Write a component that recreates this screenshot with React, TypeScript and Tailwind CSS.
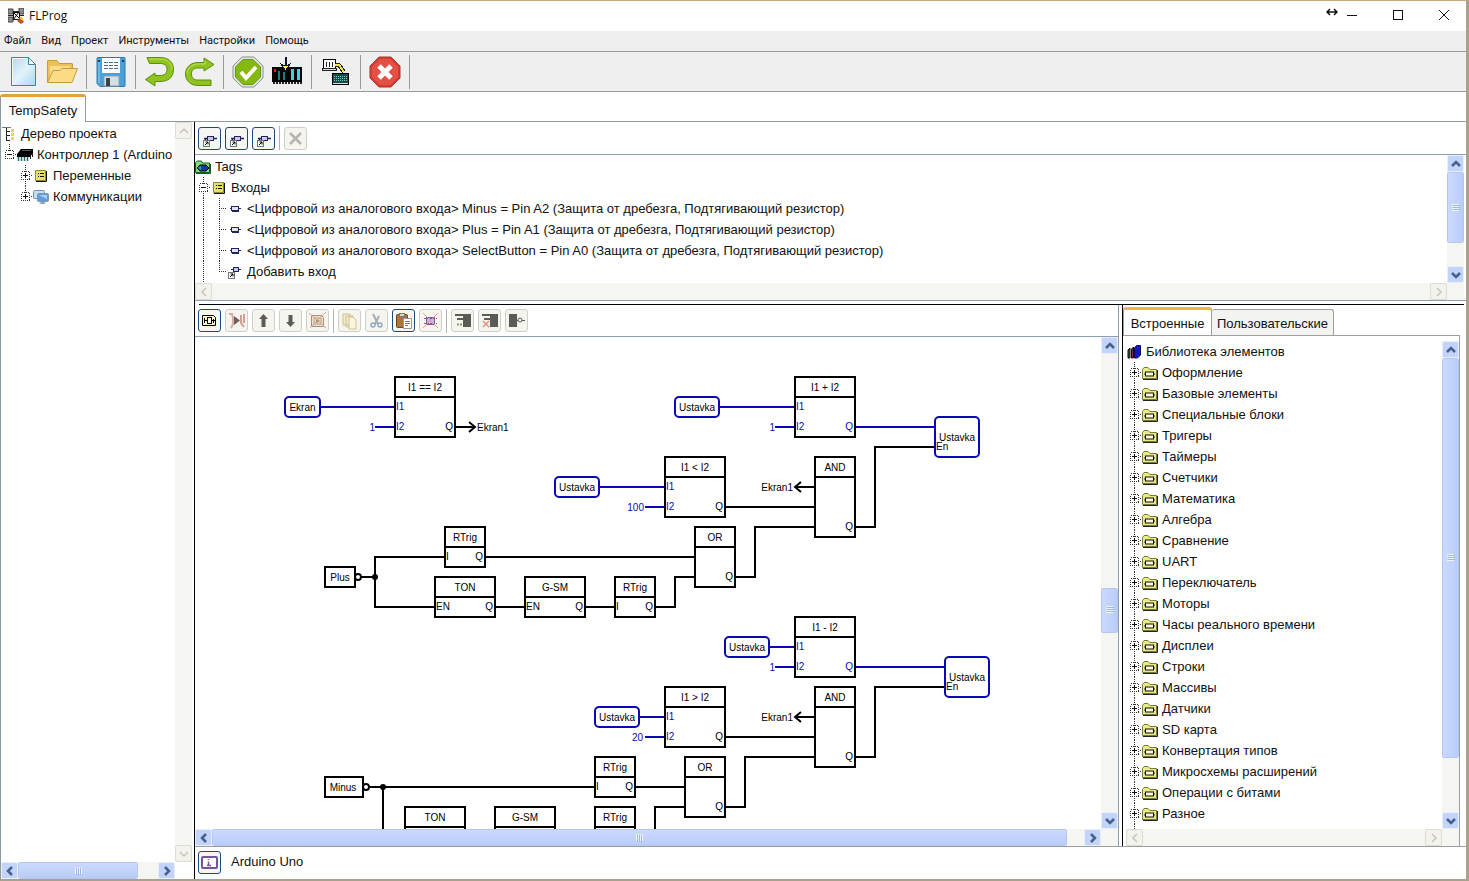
import React from "react";
import clsx from "clsx";

const menu = ["Файл", "Вид", "Проект", "Инструменты", "Настройки", "Помощь"];

const library = [
  "Оформление",
  "Базовые элементы",
  "Специальные блоки",
  "Тригеры",
  "Таймеры",
  "Счетчики",
  "Математика",
  "Алгебра",
  "Сравнение",
  "UART",
  "Переключатель",
  "Моторы",
  "Часы реального времени",
  "Дисплеи",
  "Строки",
  "Массивы",
  "Датчики",
  "SD карта",
  "Конвертация типов",
  "Микросхемы расширений",
  "Операции с битами",
  "Разное",
];

const inputs = [
  "<Цифровой из аналогового входа> Minus = Pin A2 (Защита от дребезга, Подтягивающий резистор)",
  "<Цифровой из аналогового входа> Plus = Pin A1 (Защита от дребезга, Подтягивающий резистор)",
  "<Цифровой из аналогового входа> SelectButton = Pin A0 (Защита от дребезга, Подтягивающий резистор)",
];

/* ---------- Main toolbar icons ---------- */

const NewIcon = () => (
  <svg width="32" height="32" viewBox="0 0 32 32">
    <defs>
      <linearGradient id="page" x1="0" y1="0" x2="1" y2="1">
        <stop offset="0" stopColor="#b4d8ea" />
        <stop offset="0.5" stopColor="#e2f3fa" />
        <stop offset="1" stopColor="#a9d7ec" />
      </linearGradient>
    </defs>
    <path d="M4.5 1.500h17l7 7v21h-24z" fill="url(#page)" stroke="#3d84ab" />
    <path d="M5.500 28.500V2.500h15" fill="none" stroke="#eef9fd" />
    <path d="M21.500 1.500v7h7z" fill="#fff" stroke="#3d84ab" />
  </svg>
);

const OpenIcon = () => (
  <svg width="32" height="32" viewBox="0 0 32 32">
    <path d="M1.500 26.500V5q0-.5.5-.5h9l2 3h13q.5 0 .5.5v5" fill="#edc05a" stroke="#c59a42" />
    <path d="M4 24V10h20v5H9z" fill="#f8dc8c" />
    <path d="M1.500 26.500L7 14.500h7l2-2h15.500l-5.500 14z" fill="#fbdb84" stroke="#c59a42" />
  </svg>
);

const SaveIcon = () => (
  <svg width="32" height="32" viewBox="0 0 32 32">
    <path d="M3 1.500h26q1 0 1 1v27q0 1-1 1H5l-3-3v-25q0-1 1-1z" fill="#4ba0d8" stroke="#2b76ab" />
    <path d="M4 3v24" stroke="#8fcdf0" />
    <rect x="7" y="2" width="18" height="15" fill="#fbfdff" />
    <path d="M9 6.500h14M9 9.500h14M9 12.500h14" stroke="#566d80" strokeDasharray="4 1" />
    <rect x="3" y="4" width="2" height="2" fill="#123f62" />
    <rect x="27" y="4" width="2" height="2" fill="#123f62" />
    <rect x="9" y="20" width="15" height="10" fill="#d9dee2" stroke="#8aa0ae" />
    <rect x="11" y="22" width="4" height="8" fill="#3a434b" />
  </svg>
);

const UndoIcon = () => (
  <svg width="32" height="32" viewBox="0 0 32 32">
    <path
      d="M3 1.500h13c8 0 13.500 4 13.500 12S24 25.500 16 25.500h-5V30L1.500 23.500 11 17v2.500h5c4.500 0 7-2 7-6s-2.500-6-7-6H5.500z"
      fill="#8fc31e"
      stroke="#5c8c0d"
      strokeLinejoin="round"
    />
    <path d="M5 3h11c7 0 12 4 12 10.500" fill="none" stroke="#c0e05c" />
  </svg>
);

const RedoIcon = () => (
  <svg width="32" height="32" viewBox="0 0 32 32">
    <path
      d="M28 29.500H15C8 29.500 2.500 25 2.500 18S8 6.500 15 6.500h6V2l10 6.500-10 6.500v-3h-6c-4 0-6.500 2-6.500 6s2.500 6 6.500 6h13z"
      fill="#8fc31e"
      stroke="#5c8c0d"
      strokeLinejoin="round"
    />
    <path d="M4 18C4 12 9 8 15 8h7V5" fill="none" stroke="#c0e05c" />
  </svg>
);

const CheckIcon = () => (
  <svg width="32" height="32" viewBox="0 0 32 32">
    <path d="M10 1h12l9 9v12l-9 9H10l-9-9V10z" fill="#dfe3e3" stroke="#8b9190" />
    <path d="M11 3.500h10l7.500 7.500v10L21 28.500H11L3.500 21V11z" fill="#86b90f" stroke="#699a08" />
    <path d="M9 16l5 6 10-11" fill="none" stroke="#fff" strokeWidth="4" />
  </svg>
);

const UploadIcon = () => (
  <svg width="32" height="32" viewBox="0 0 32 32" shapeRendering="crispEdges">
    <rect x="1" y="11" width="30" height="15" fill="#050505" />
    <path d="M2 27h29" stroke="#222" strokeWidth="2" strokeDasharray="2 1" />
    <rect x="3" y="13" width="2" height="3" fill="#e02020" />
    <path d="M8 15v9M13 16v8" stroke="#1d7f83" strokeWidth="2" />
    <path d="M21 13v11M27 13v11" stroke="#35d6dc" strokeWidth="3" />
    <path d="M14.500 1v10" stroke="#14142e" strokeWidth="2" />
    <path d="M9.500 7.500l5 7 5-7-3 2h-4z" fill="#fff06a" stroke="#14142e" />
  </svg>
);

const MonitorIcon = () => (
  <svg width="32" height="32" viewBox="0 0 32 32" shapeRendering="crispEdges">
    <path d="M3.500 3.500h12v9h-12z" fill="#fff" stroke="#000" />
    <path d="M6 6v5M9 6v5M12 6v5" stroke="#222" />
    <rect x="2.500" y="12.500" width="14" height="2" fill="#ddd" stroke="#222" />
    <path d="M15 9h4l5 7" fill="none" stroke="#222" strokeWidth="4" />
    <path d="M15 9h4l5 7" fill="none" stroke="#f4e548" strokeWidth="2" />
    <path d="M12.500 17.500h16v11h-16z" fill="#1c4a4a" stroke="#000" />
    <path d="M14 20.500h13M14 22.500h13M14 24.500h13" stroke="#74c9c1" strokeDasharray="1 1" />
    <path d="M13 27h15" stroke="#ddd" />
  </svg>
);

const StopIcon = () => (
  <svg width="32" height="32" viewBox="0 0 32 32">
    <path d="M10 1h12l9 9v12l-9 9H10l-9-9V10z" fill="#d63c30" stroke="#b0382e" />
    <path d="M11 3h10l8 8v10l-8 8H11l-8-8V11z" fill="#e45044" />
    <path d="M10 10l12 12M22 10L10 22" stroke="#fff" strokeWidth="5" />
  </svg>
);

const mainTools = [
  [
    { name: "Новый", icon: <NewIcon /> },
    { name: "Открыть", icon: <OpenIcon /> },
  ],
  [{ name: "Сохранить", icon: <SaveIcon /> }],
  [
    { name: "Отменить", icon: <UndoIcon /> },
    { name: "Повторить", icon: <RedoIcon /> },
  ],
  [
    { name: "Проверить", icon: <CheckIcon /> },
    { name: "Загрузить", icon: <UploadIcon /> },
  ],
  [{ name: "Монитор порта", icon: <MonitorIcon /> }],
  [{ name: "Закрыть проект", icon: <StopIcon /> }],
];

/* ---------- Small icons ---------- */

const Small = ({ children }: { children?: React.ReactNode }) => (
  <svg width="16" height="16" viewBox="0 0 16 16" className="shrink-0" aria-hidden="true">
    {children}
  </svg>
);

const AppIcon = () => (
  <Small>
    <path d="M0 1h5v5H0zM0 9h5v5H0zM11 0h5v6h-5z" fill="#8d8d8d" stroke="#444" />
    <path d="M0 7.500h16M5 3.500h6" stroke="#222" />
    <path d="M5.500 4.500h6v7h-6z" fill="#f2f2f2" stroke="#111" />
    <path d="M5 4l7 7M11 4l-6 8" stroke="#111" />
    <path d="M9 13l4-4 3 5-3 2z" fill="#c4511f" />
    <path d="M12 9l3 3" stroke="#f3d33b" strokeWidth="2" />
  </Small>
);

const ProjectIcon = () => (
  <Small>
    <path d="M1 1.500h9" stroke="#777" />
    <path d="M5.500 2v13M5 5.500h4M5 9.500h4M5 14.500h4" stroke="#222" />
    <path d="M11.500 3v12" stroke="#e5df2f" strokeWidth="3" strokeDasharray="3 1" />
  </Small>
);

const ChipIcon = () => (
  <Small>
    <path d="M4 2h12v4l-3 4H0V7z" fill="#000" />
    <path d="M5 3.500h9" stroke="#555" />
    <path d="M1.500 10v4M4.500 10v4M7.500 10v4M10.500 10v4" stroke="#1b7070" strokeWidth="1.500" />
    <path d="M13.500 9v3M15.500 6v4" stroke="#222" />
  </Small>
);

const ListIcon = () => (
  <Small>
    <path d="M3 13.500h10.500V3" fill="none" stroke="#111" />
    <path d="M2.500 2.500h10v10h-10z" fill="#e4e069" stroke="#8a883a" />
    <path d="M5 5.500h1M7 5.500h4M5 8.500h1M7 8.500h4" stroke="#111" />
  </Small>
);

const CommIcon = () => (
  <Small>
    <rect x="0.500" y="1.500" width="11" height="8" rx="1" fill="#c7dff5" stroke="#6f8fae" />
    <rect x="4.500" y="4.500" width="11" height="8" rx="1" fill="#5d9ee0" stroke="#8096ad" />
    <path d="M6 6h8v4z" fill="#a9d1f7" />
    <path d="M8 13h4v2H6z" fill="#9aa7b5" />
  </Small>
);

const TagsIcon = () => (
  <Small>
    <path d="M.5 13.500v-10l2-1.500h4l1 2h7v9.500z" fill="#7de07a" stroke="#1b5c20" />
    <path d="M1 14.500h14.500V5" fill="none" stroke="#153" />
    <path d="M2 9l3-3h6l3 3-3 3H5z" fill="#143a9c" stroke="#000" />
    <path d="M3 9l3-2v4z" fill="#19b3a0" />
  </Small>
);

const PinIcon = () => (
  <Small>
    <path d="M3 7.500h11" stroke="#22225c" />
    <rect x="4.500" y="5.500" width="7" height="4" fill="#e4e4f8" stroke="#22225c" />
    <path d="M5 10.500h7" fill="none" stroke="#22225c" />
  </Small>
);

const AddPinIcon = () => (
  <Small>
    <path d="M4 5.500h10M6.500 5v5" stroke="#22225c" />
    <rect x="6.500" y="3.500" width="5" height="4" fill="#c8c8ef" stroke="#22225c" />
    <rect x="1.500" y="8.500" width="6" height="6" fill="#fff" stroke="#777" />
    <path d="M3 13l3-3M3.500 10H6v2.500" stroke="#000" fill="none" />
  </Small>
);

const BooksIcon = () => (
  <Small>
    <path d="M2 14V6l2-2v10z" fill="#2f5a33" stroke="#111" />
    <path d="M5.500 14V5l2-2v11z" fill="#7a2445" stroke="#111" />
    <path d="M8.500 14V4l2-2.500h4V11l-3 3z" fill="#1414c4" stroke="#0b0b50" />
  </Small>
);

const FolderIcon = () => (
  <Small>
    <path d="M.5 13.500v-9l1.500-2h4l2 2h6.500v9z" fill="#e9eb84" stroke="#777a33" />
    <path d="M1 14.500h14.500V5" fill="none" stroke="#222" />
    <path d="M2 9h11" stroke="#222" />
    <rect x="3.500" y="7" width="8" height="4" fill="#fff8d8" stroke="#111" />
  </Small>
);

type NodeKind = "plus" | "minus" | "leaf" | "line" | "none";

/* One 16px cell of tree connectors */
const Branch = ({ kind, last }: { kind: NodeKind; last?: boolean }) => (
  <svg width="16" height="21" viewBox="0 0 16 21" className="shrink-0" shapeRendering="crispEdges" aria-hidden="true">
    {kind !== "none" && (
      <path d={last ? "M8.500 0v11" : "M8.500 0v21"} stroke="#333" strokeDasharray="1 1" />
    )}
    {kind !== "line" && kind !== "none" && <path d="M8 10.500h8" stroke="#333" strokeDasharray="1 1" />}
    {(kind === "plus" || kind === "minus") && (
      <>
        <rect x="4.500" y="6.500" width="8" height="8" fill="#fff" stroke="#333" strokeDasharray="1 1" />
        <path d="M6 10.500h5" stroke="#111" />
      </>
    )}
    {kind === "plus" && <path d="M8.500 8v5" stroke="#111" />}
  </svg>
);

type RowProps = {
  icon: React.ReactNode;
  label?: string;
  branches?: NodeKind[];
  last?: boolean;
};

const Row = ({ icon, label, branches = [], last }: RowProps) => (
  <li className="flex h-[21px] items-center whitespace-nowrap">
    {branches.map((kind, i) => (
      <Branch key={i} kind={kind} last={last && i === branches.length - 1} />
    ))}
    {icon}
    <span className="ml-1">{label}</span>
  </li>
);

/* ---------- Scroll bars ---------- */

const arrows = {
  up: "M3 9l4-4 4 4",
  down: "M3 5l4 4 4-4",
  left: "M9 3L5 7l4 4",
  right: "M5 3l4 4-4 4",
};

const arrowNames = { up: "Вверх", down: "Вниз", left: "Влево", right: "Вправо" };

const ScrollButton = ({ dir, off }: { dir: keyof typeof arrows; off?: boolean }) => (
  <button
    type="button"
    aria-label={arrowNames[dir]}
    disabled={off}
    className={clsx(
      "flex size-[17px] shrink-0 items-center justify-center rounded-xs border",
      off ? "border-[#dddcd5] bg-[#f3f2ec]" : "border-[#e8eefc] bg-[#c3d4fb]"
    )}
  >
    <svg width="14" height="14" viewBox="0 0 14 14">
      <path d={arrows[dir]} fill="none" stroke={off ? "#c6c5bd" : "#44608f"} strokeWidth={off ? 1.5 : 2.5} />
    </svg>
  </button>
);

type ScrollProps = {
  vertical?: boolean;
  start?: number;
  size?: number;
  off?: boolean;
};

/* start and size of the thumb are percents of the track */
const ScrollBar = ({ vertical, start = 0, size = 0, off }: ScrollProps) => (
  <div className={clsx("flex shrink-0 bg-[#f5f5f1]", vertical ? "w-[17px] flex-col" : "h-[17px]")}>
    <ScrollButton dir={vertical ? "up" : "left"} off={off} />
    <div className={clsx("flex min-h-0 min-w-0 flex-1", vertical && "flex-col")}>
      {!off && (
        <>
          <div className="shrink-0" style={{ flexBasis: `${start}%` }} />
          <div
            className={clsx(
              "flex shrink-0 items-center justify-center rounded-xs border border-white outline -outline-offset-1 outline-[#b4c6f0]",
              vertical
                ? "bg-linear-to-r from-[#cbd9fe] to-[#b9cdfa]"
                : "bg-linear-to-b from-[#cbd9fe] to-[#b9cdfa]"
            )}
            style={{ flexBasis: `${size}%` }}
          >
            <svg width="8" height="8" viewBox="0 0 8 8" className={vertical ? "" : "rotate-90"}>
              <path d="M0 .5h7M0 2.500h7M0 4.500h7M0 6.500h7" stroke="#eef4fe" />
              <path d="M1 1.500h7M1 3.500h7M1 5.500h7" stroke="#9fb5e8" />
            </svg>
          </div>
        </>
      )}
    </div>
    <ScrollButton dir={vertical ? "down" : "right"} off={off} />
  </div>
);

/* ---------- Small tool buttons ---------- */

const ToolButton = ({ name, off, children }: { name: string; off?: boolean; children: React.ReactNode }) => (
  <button
    type="button"
    aria-label={name}
    disabled={off}
    className={clsx(
      "flex size-[23px] shrink-0 items-center justify-center rounded-[3px] border",
      off ? "border-[#d0cfc5] bg-[#f5f4ee]" : "border-[#1f4a78] bg-[#f6f6f2]"
    )}
  >
    <svg width="19" height="19" viewBox="0 0 19 19">
      {children}
    </svg>
  </button>
);

const Divider = () => <div className="h-6 w-px bg-[#b4b4ac]" />;

const addPin = (
  <>
    <path d="M4 9.500h13M5.500 9v4" stroke="#22225c" strokeWidth="1.500" />
    <rect x="7.500" y="7.500" width="6" height="4" fill="#c8c8ef" stroke="#22225c" />
    <rect x="3.500" y="11.500" width="6" height="6" fill="#fff" stroke="#777" />
    <path d="M5 16l3-3M5.500 13H8v2.500" stroke="#000" fill="none" />
  </>
);

const DiagramTools = () => (
  <div className="flex h-8 shrink-0 items-center gap-1 border-b border-[#8ba0ac] pl-[3px]">
    <ToolButton name="Добавить плату">
      <path d="M2.500 4.500h11l2 2v8h-13z" fill="#fbf7b0" stroke="#000" />
      <rect x="7.500" y="6.500" width="4" height="6" fill="#fff" stroke="#000" />
      <path d="M4 9.500h3M12 9.500h3M4.500 7v5M13.500 8v4" stroke="#000" />
    </ToolButton>
    <ToolButton name="Вставить плату" off>
      <path d="M2 3h3l1 4v6l-2 4" stroke="#dba8a4" strokeWidth="2" fill="none" />
      <path d="M7 5l6 4.500L7 14z" fill="#6f625c" />
      <path d="M14 4v8l3 4M17 3v9" stroke="#d39d98" strokeWidth="2" fill="none" />
    </ToolButton>
    <ToolButton name="Плата выше" off>
      <path d="M9.500 3L14 8h-2.500v8h-4V8H5z" fill="#5c5c56" />
    </ToolButton>
    <ToolButton name="Плата ниже" off>
      <path d="M9.500 16L14 11h-2.500V4h-4v7H5z" fill="#5c5c56" />
    </ToolButton>
    <ToolButton name="Удалить плату" off>
      <path d="M3.500 4.500h10l2 2v9h-12z" fill="#efe3c6" stroke="#a38e86" />
      <path d="M6 7h7v6H6z" fill="none" stroke="#b39a88" />
      <path d="M8 8l4 2-4 2z" fill="#8b7868" />
      <path d="M1 2l17 15M18 1L2 17" stroke="#e0a196" />
    </ToolButton>
    <Divider />
    <ToolButton name="Копировать" off>
      <path d="M3 3h7v11H3zM6 5h7v11H6z" fill="#f3ebcc" stroke="#cfc195" />
      <path d="M9 6h4l3 3v9H9z" fill="#fbf5dd" stroke="#cfc195" />
    </ToolButton>
    <ToolButton name="Вырезать" off>
      <path d="M6 3l5 10M12 5l-4 8" stroke="#a3aeb6" strokeWidth="2" />
      <circle cx="6" cy="14" r="2" fill="none" stroke="#8fa9c4" strokeWidth="1.500" />
      <circle cx="13" cy="14" r="2" fill="none" stroke="#8fa9c4" strokeWidth="1.500" />
    </ToolButton>
    <ToolButton name="Вставить">
      <rect x="2.500" y="3.500" width="11" height="13" rx="1" fill="#b07435" stroke="#70431a" />
      <rect x="5.500" y="2.500" width="5" height="3" fill="#d8d8d8" stroke="#777" />
      <path d="M9.500 7.500h8v10h-8z" fill="#fff" stroke="#999" />
      <path d="M11 10.500h5M11 12.500h5M11 14.500h3" stroke="#777" />
    </ToolButton>
    <ToolButton name="Удалить" off>
      <rect x="5.500" y="6.500" width="8" height="7" fill="#c6b8dc" stroke="#6f5fa0" />
      <path d="M3 7.500h13M3 12.500h13" stroke="#6f5fa0" strokeDasharray="2 1" />
      <path d="M2 2l15 15M17 2L2 17" stroke="#e29a94" />
    </ToolButton>
    <Divider />
    <ToolButton name="Добавить вход блока" off>
      <rect x="10" y="3" width="8" height="13" fill="#5c5c56" />
      <path d="M2 4h8M4 8h6" stroke="#5c5c56" strokeWidth="2" />
      <path d="M4 13.500h6" stroke="#8a9a70" strokeWidth="2" strokeDasharray="2 1" />
    </ToolButton>
    <ToolButton name="Удалить вход блока" off>
      <rect x="10" y="3" width="8" height="13" fill="#5c5c56" />
      <path d="M2 4h8M4 8h6" stroke="#5c5c56" strokeWidth="2" />
      <path d="M3 10l6 6M9 10l-6 6" stroke="#e29084" strokeWidth="1.500" />
    </ToolButton>
    <ToolButton name="Инвертировать" off>
      <rect x="2" y="3" width="8" height="13" fill="#5c5c56" />
      <path d="M10 9.500h8" stroke="#5c5c56" />
      <circle cx="13" cy="9" r="2" fill="#f5f4ee" stroke="#5c5c56" />
    </ToolButton>
  </div>
);

/* ---------- Diagram ---------- */

const BLUE = "#0a0ab4";

type BlockProps = {
  x: number;
  y: number;
  w?: number;
  h?: number;
  title: string;
  input?: string;
  output?: string;
  blueOut?: boolean;
};

const Block = ({ x, y, w = 40, h = 40, title, input, output = "Q", blueOut }: BlockProps) => (
  <g>
    <path d={`M${x} ${y}h${w}v${h}h${-w}zM${x} ${y + 20}h${w}`} fill="none" stroke="#000" strokeWidth="2" />
    <text x={x + w / 2} y={y + 14} textAnchor="middle">{title}</text>
    {input && <text x={x + 1} y={y + 33}>{input}</text>}
    {output && (
      <text x={x + w - 2} y={y + h - 7} textAnchor="end" fill={blueOut ? BLUE : "#000"}>{output}</text>
    )}
  </g>
);

/* Arithmetic and compare blocks have two blue inputs */
const MathBlock = ({ x, y, title, blueOut }: BlockProps) => (
  <g>
    <Block x={x} y={y} w={60} h={60} title={title} blueOut={blueOut} />
    <text x={x + 1} y={y + 33} fill={BLUE}>I1</text>
    <text x={x + 1} y={y + 53} fill={BLUE}>I2</text>
  </g>
);

const Variable = ({ x, y, w = 44, name }: { x: number; y: number; w?: number; name: string }) => (
  <g>
    <rect x={x} y={y} width={w} height="20" rx="4" fill="none" stroke={BLUE} strokeWidth="2" />
    <text x={x + w / 2} y={y + 14} textAnchor="middle">{name}</text>
  </g>
);

const Output = ({ x, y, name }: { x: number; y: number; name: string }) => (
  <g>
    <rect x={x} y={y} width="44" height="40" rx="4" fill="none" stroke={BLUE} strokeWidth="2" />
    <text x={x + 22} y={y + 24} textAnchor="middle">{name}</text>
    <text x={x + 1} y={y + 33}>En</text>
  </g>
);

const Diagram = () => (
  <svg
    width="906"
    height="492"
    viewBox="0 0 906 492"
    className="block font-['Liberation_Sans',Arial,sans-serif] text-[10px]"
  >
    <g fill="none" stroke={BLUE} strokeWidth="2">
      <path d="M125 70H200M180 90H200" />
      <path d="M524 70H600M580 90H600M660 90H740" />
      <path d="M404 150H470M450 170H470" />
      <path d="M574 310H600M580 330H600M660 330H750" />
      <path d="M444 380H470M450 400H470" />
    </g>
    <g fill="none" stroke="#000" strokeWidth="2">
      <path d="M260 90H279M274 85l6 5l-6 5" />
      <path d="M660 190H680V110H740" />
      <path d="M530 170H620M620 150H601M606 145l-6 5l6 5" />
      <path d="M540 240H560V190H620" />
      <path d="M166 240H180M250 220H180V270H240" />
      <path d="M290 220H500M300 270H330M390 270H420M460 270H480V240H500" />
      <path d="M660 420H680V350H750" />
      <path d="M530 400H620M620 380H601M606 375l-6 5l6 5" />
      <path d="M530 470H550V420H620" />
      <path d="M174 450H400M188 450V492M440 450H490M460 492V470H490" />
      <circle cx="163" cy="240" r="3" />
      <circle cx="171" cy="450" r="3" />
      <rect x="130" y="230" width="30" height="20" />
      <rect x="130" y="440" width="38" height="20" />
    </g>
    <circle cx="180" cy="240" r="3" />
    <circle cx="188" cy="450" r="3" />
    <text x="145" y="244" textAnchor="middle">Plus</text>
    <text x="148" y="454" textAnchor="middle">Minus</text>

    <g fill={BLUE} textAnchor="end">
      <text x="180" y="94">1</text>
      <text x="580" y="94">1</text>
      <text x="449" y="174">100</text>
      <text x="580" y="334">1</text>
      <text x="448" y="404">20</text>
    </g>
    <text x="282" y="94">Ekran1</text>
    <text x="598" y="154" textAnchor="end">Ekran1</text>
    <text x="598" y="384" textAnchor="end">Ekran1</text>

    <Variable x={90} y={60} w={35} name="Ekran" />
    <Variable x={480} y={60} name="Ustavka" />
    <Variable x={360} y={140} name="Ustavka" />
    <Variable x={530} y={300} name="Ustavka" />
    <Variable x={400} y={370} name="Ustavka" />
    <Output x={740} y={80} name="Ustavka" />
    <Output x={750} y={320} name="Ustavka" />

    <MathBlock x={200} y={40} title="I1 == I2" />
    <MathBlock x={600} y={40} title="I1 + I2" blueOut />
    <MathBlock x={470} y={120} title="I1 &lt; I2" />
    <MathBlock x={600} y={280} title="I1 - I2" blueOut />
    <MathBlock x={470} y={350} title="I1 &gt; I2" />
    <Block x={620} y={120} h={80} title="AND" />
    <Block x={620} y={350} h={80} title="AND" />
    <Block x={500} y={190} h={60} title="OR" />
    <Block x={490} y={420} h={60} title="OR" />
    <Block x={250} y={190} title="RTrig" input="I" />
    <Block x={420} y={240} title="RTrig" input="I" />
    <Block x={400} y={420} title="RTrig" input="I" />
    <Block x={240} y={240} w={60} title="TON" input="EN" />
    <Block x={330} y={240} w={60} title="G-SM" input="EN" />
    {/* ports of the bottom row lie below the visible area */}
    <Block x={210} y={470} w={60} title="TON" output="" />
    <Block x={300} y={470} w={60} title="G-SM" output="" />
    <Block x={400} y={470} title="RTrig" output="" />
  </svg>
);

/* ---------- Panels ---------- */

const ProjectTree = () => (
  <aside className="flex w-[194px] shrink-0 border-l border-[#8f9aa0]">
    <div className="flex min-w-0 flex-1 flex-col">
      <ul className="min-h-0 flex-1 overflow-hidden pt-px">
        <Row icon={<ProjectIcon />} label="Дерево проекта" />
        <Row branches={["minus"]} last icon={<ChipIcon />} label="Контроллер 1 (Arduino Uno)" />
        <Row branches={["none", "plus"]} icon={<ListIcon />} label="Переменные" />
        <Row branches={["none", "plus"]} last icon={<CommIcon />} label="Коммуникации" />
      </ul>
      <ScrollBar start={0} size={86} />
    </div>
    <div className="mr-0.5 flex pb-[17px]">
      <ScrollBar vertical off />
    </div>
  </aside>
);

const Tags = () => (
  <section className="shrink-0">
    <div className="flex h-[33px] items-center gap-1 border-b border-[#8ba0ac] pl-[3px]">
      <ToolButton name="Добавить вход">{addPin}</ToolButton>
      <ToolButton name="Добавить выход">{addPin}</ToolButton>
      <ToolButton name="Добавить переменную">{addPin}</ToolButton>
      <Divider />
      <ToolButton name="Удалить тег" off>
        <path d="M4 4l11 11M15 4L4 15" stroke="#b5b4ad" strokeWidth="2.500" />
      </ToolButton>
    </div>
    <div className="flex h-[146px] border-b border-[#8ba0ac]">
      <div className="flex min-w-0 flex-1 flex-col">
        <ul className="min-h-0 flex-1 overflow-hidden pt-px">
          <Row icon={<TagsIcon />} label="Tags" />
          <Row branches={["minus"]} icon={<ListIcon />} label="Входы" />
          {inputs.map((input) => (
            <Row key={input} branches={["line", "leaf"]} icon={<PinIcon />} label={input} />
          ))}
          <Row branches={["line", "leaf"]} last icon={<AddPinIcon />} label="Добавить вход" />
        </ul>
        <ScrollBar off />
      </div>
      <div className="mr-0.5 flex bg-[#f5f5f1] pb-[17px]">
        <ScrollBar vertical start={0} size={76} />
      </div>
    </div>
  </section>
);

const Library = () => (
  <aside className="flex w-[344px] shrink-0 flex-col border-l border-black">
    <div role="tablist" className="flex h-[30px] shrink-0 items-end">
      <button
        type="button"
        role="tab"
        aria-selected="true"
        className="h-7 w-[89px] rounded-t-[3px] border border-t-3 border-b-0 border-[#9b9f9f] border-t-[#f0b545] bg-white pt-0.5"
      >
        Встроенные
      </button>
      <button
        type="button"
        role="tab"
        aria-selected="false"
        className="h-[26px] w-[122px] rounded-t-[3px] border border-b-0 border-l-0 border-[#9b9f9f] bg-[#f3f3ef] pt-0.5 whitespace-nowrap"
      >
        Пользовательские
      </button>
    </div>
    <div className="mr-[6px] flex min-h-0 flex-1 border-t border-r border-[#9b9f9f] pt-[5px]">
      <div className="ml-[3px] flex min-w-0 flex-1 flex-col">
        <ul className="min-h-0 flex-1 overflow-hidden">
          <Row icon={<BooksIcon />} label="Библиотека элементов" />
          {library.map((name) => (
            <Row key={name} branches={["plus"]} icon={<FolderIcon />} label={name} />
          ))}
          <Row branches={["plus"]} icon={<FolderIcon />} />
        </ul>
        <ScrollBar off />
      </div>
      <div className="flex bg-[#f5f5f1] pb-[17px]">
        <ScrollBar vertical start={0} size={88} />
      </div>
    </div>
  </aside>
);

const TitleBar = () => (
  <header className="flex h-[30px] shrink-0 items-center bg-white pl-2">
    <AppIcon />
    <h1 className="ml-[5px] flex-1 font-['Open_Sans','Noto_Sans',sans-serif] text-xs">FLProg</h1>
    <svg width="12" height="8" viewBox="0 0 12 8" className="mr-2 mb-2" aria-hidden="true">
      <path d="M2 4h8M4 1L1 4l3 3M8 1l3 3-3 3" fill="none" stroke="#111" strokeWidth="1.500" />
    </svg>
    <div className="mr-4 flex gap-[34px] pb-0.5">
      <button type="button" aria-label="Свернуть">
        <svg width="12" height="12" viewBox="0 0 12 12"><path d="M1 6.500h10" stroke="#111" /></svg>
      </button>
      <button type="button" aria-label="Развернуть">
        <svg width="12" height="12" viewBox="0 0 12 12">
          <rect x="1.500" y="1.500" width="9" height="9" fill="none" stroke="#111" />
        </svg>
      </button>
      <button type="button" aria-label="Закрыть">
        <svg width="12" height="12" viewBox="0 0 12 12">
          <path d="M1 1l10 10M11 1L1 11" stroke="#111" />
        </svg>
      </button>
    </div>
  </header>
);

export default function App() {
  return (
    <div className="flex h-screen flex-col overflow-hidden border-t border-r-3 border-b-2 border-[#a8a28c] border-t-[#c9a877] bg-white font-['Liberation_Sans',Arial,sans-serif] text-[13px] text-[#111]">
      <TitleBar />
      <nav className="flex h-[21px] shrink-0 items-center gap-2.5 border-b border-[#9a9a9a] bg-[#efefef] pl-1 font-['Roboto','Noto_Sans',sans-serif] text-[11px]">
        {menu.map((item) => (
          <button key={item} type="button">{item}</button>
        ))}
      </nav>
      <div className="flex h-10 shrink-0 items-center border-b border-[#9a9a9a] bg-[#efefef] pl-[3px]">
        {mainTools.map((group, i) => (
          <div key={i} className="flex items-center">
            {group.map(({ name, icon }) => (
              <button key={name} type="button" aria-label={name} className="flex w-[39px] justify-center">
                {icon}
              </button>
            ))}
            <div className="mr-1 ml-[5px] h-[34px] w-px bg-[#9a9a9a]" />
          </div>
        ))}
      </div>
      <div role="tablist" className="flex h-[30px] shrink-0 items-end">
        <button
          type="button"
          role="tab"
          aria-selected="true"
          className="h-7 w-[86px] rounded-t-[3px] border border-t-3 border-b-0 border-[#8f9aa0] border-t-[#e2a13c] bg-[#fcfcfc] pt-0.5"
        >
          TempSafety
        </button>
        <div className="h-full flex-1 border-b border-[#8f9aa0]" />
      </div>

      <main className="flex min-h-0 flex-1">
        <ProjectTree />
        <div className="flex min-w-0 flex-1 flex-col border-l border-black">
          <Tags />
          <div className="mt-[3px] mr-0.5 ml-1 h-px shrink-0 bg-black" />
          <div className="flex min-h-0 flex-1">
            <section className="mr-[3px] flex min-w-0 flex-1 flex-col border-r border-[#8ba0ac]">
              <DiagramTools />
              <div className="flex min-h-0 flex-1">
                <div className="flex min-w-0 flex-1 flex-col">
                  <div className="min-h-0 flex-1 overflow-hidden">
                    <Diagram />
                  </div>
                  <ScrollBar start={0} size={98} />
                </div>
                <div className="flex bg-[#f5f5f1] pb-[17px]">
                  <ScrollBar vertical start={51} size={10} />
                </div>
              </div>
            </section>
            <Library />
          </div>
          <footer className="flex h-[33px] shrink-0 items-center gap-2.5 border-t border-[#9b9f9f] pb-0.5 pl-[3px]">
            <ToolButton name="О контроллере">
              <rect x="2" y="4" width="15" height="11" rx="1" fill="#fff" stroke="#76549a" strokeWidth="2" />
              <path d="M8.500 6v1M8.500 8.500v4M7 12.500h4" stroke="#76549a" strokeWidth="1.500" />
            </ToolButton>
            <span>Arduino Uno</span>
          </footer>
        </div>
      </main>
    </div>
  );
}
